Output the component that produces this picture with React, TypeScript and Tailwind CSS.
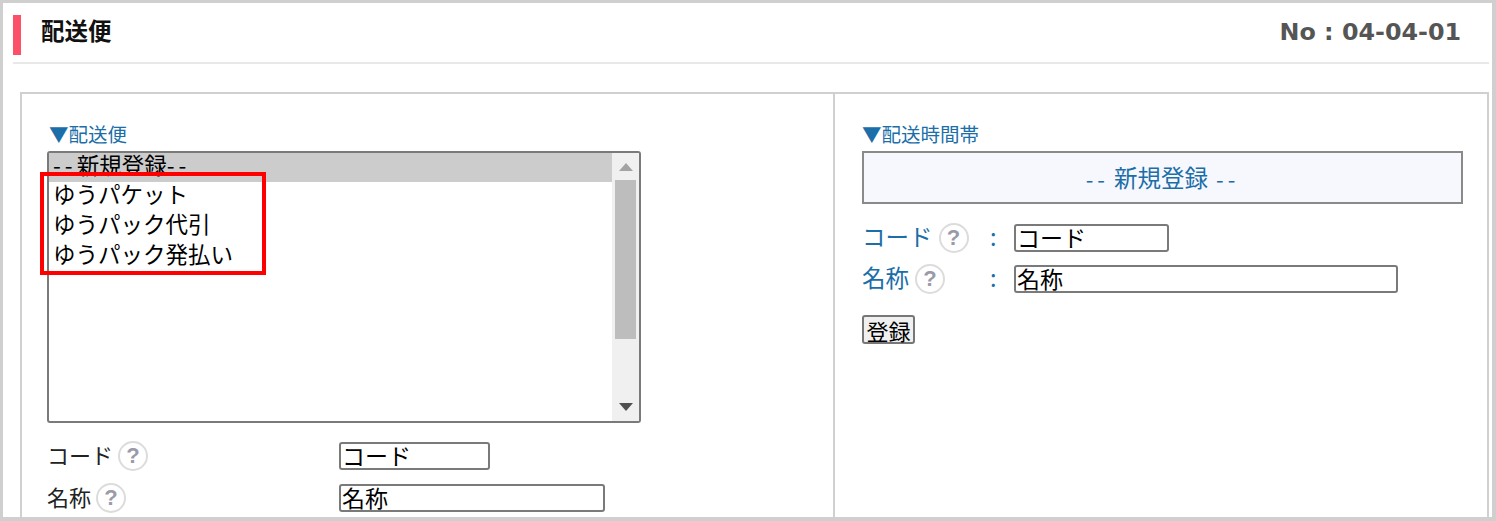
const FONT = "font-['Noto_Sans_CJK_JP','Liberation_Sans',sans-serif]";

function Help() {
  return (
    <span className="inline-flex h-[30px] w-[30px] shrink-0 items-center justify-center rounded-full border-2 border-[#dcdcdc] bg-white font-['Liberation_Sans',sans-serif] text-[22px] font-bold leading-none text-[#9a9aa8]">
      ?
    </span>
  );
}

function Field({ w, value }: { w: string; value: string }) {
  return (
    <input
      readOnly
      value={value}
      className={`${w} h-[28px] rounded-[3px] border-2 border-[#7a7a7a] bg-white pb-[3px] pl-[1px] text-[23px] leading-none text-black outline-none ${FONT}`}
    />
  );
}

function ScrollArrow({ up, dark }: { up?: boolean; dark?: boolean }) {
  return (
    <svg width="14" height="8" viewBox="0 0 14 8" className={dark ? "fill-[#505050]" : "fill-[#a3a3a3]"}>
      <path d={up ? "M7 0 14 8H0Z" : "M0 0H14L7 8Z"} />
    </svg>
  );
}

function Dashes() {
  return <span className="tracking-[4px]">--</span>;
}

export default function App() {
  return (
    <div className={`relative h-[521px] w-[1496px] overflow-hidden border-b-4 border-l-[3px] border-r-4 border-t-[3px] border-[#cfcfcf] bg-white ${FONT}`}>
      <header className="ml-[10px] mr-[3px] flex h-[61px] items-start border-b-2 border-[#e8e8e8] pt-[12px]">
        <div className="h-[40px] w-[8px] bg-[#fb5068]" />
        <h1 className="ml-[20px] -mt-[1px] text-[23.5px] font-bold leading-[32px] text-[#111]">配送便</h1>
        <div className="ml-auto mr-[28px] mt-[1px] font-['DejaVu_Sans',sans-serif] text-[23.8px] font-bold leading-[32px] text-[#555]">
          No : 04-04-01
        </div>
      </header>

      <main className="ml-[17px] mr-[3px] mt-[28px] flex h-[500px] border-2 border-[#d0d0d0]">
        <section className="w-[813px] shrink-0 border-r-2 border-[#d0d0d0] pl-[25px] pt-[28px]">
          <div className="ml-[2px] text-[19.5px] leading-[24px] text-[#1b6ea8]">▼配送便</div>
          <div className="mt-[5px] flex h-[272px] w-[594px] overflow-hidden rounded-[3px] border-2 border-[#7a7a7a] text-[22.5px] leading-[30px] text-black">
            <div className="min-w-0 flex-1 pl-[4px]">
              <div className="-ml-[4px] h-[29px] bg-[#cccccc] pl-[4px] leading-[22px]">
                <Dashes />新規登録<Dashes />
              </div>
              <div className="-mt-[4px]">ゆうパケット</div>
              <div>ゆうパック代引</div>
              <div>ゆうパック発払い</div>
            </div>
            <div className="flex w-[27px] shrink-0 flex-col items-center bg-[#f0f0f0]">
              <div className="flex h-[27px] items-center"><ScrollArrow up /></div>
              <div className="h-[159px] w-[21px] bg-[#bdbdbd]" />
              <div className="mt-auto flex h-[28px] items-center"><ScrollArrow dark /></div>
            </div>
          </div>
          <div className="mt-[18px] grid grid-cols-[292px_1fr] items-center gap-y-[12px] text-[22px] text-[#222]">
            <div className="flex items-center gap-[5px]"><span className="pb-[4px] leading-[24px]">コード</span><Help /></div>
            <Field w="w-[151px]" value="コード" />
            <div className="flex items-center gap-[5px]"><span className="pb-[4px] leading-[24px]">名称</span><Help /></div>
            <Field w="w-[266px]" value="名称" />
          </div>
        </section>

        <section className="flex-1 pl-[27px] pt-[28px]">
          <div className="text-[19.5px] leading-[24px] text-[#1b6ea8]">▼配送時間帯</div>
          <div className="mt-[5px] flex h-[53px] w-[601px] items-center justify-center gap-[8px] border-2 border-[#8a8a8a] bg-[#f7f8fe] pt-[1px] text-[23.5px] text-[#1b6ea8]">
            <span className="-mr-[3px] text-[22px] tracking-[4px]">--</span>
            <span>新規登録</span>
            <span className="text-[22px] tracking-[4px]">--</span>
          </div>
          <div className="mt-[19px] grid grid-cols-[128px_24px_1fr] items-center gap-y-[11px] text-[23.5px] text-[#1b6ea8]">
            <div className="flex items-center gap-[6px]"><span className="pb-[4px] leading-[24px]">コード</span><Help /></div>
            <span className="pb-[4px] leading-[24px]">:</span>
            <Field w="w-[155px]" value="コード" />
            <div className="flex items-center gap-[6px]"><span className="pb-[4px] leading-[24px]">名称</span><Help /></div>
            <span className="pb-[4px] leading-[24px]">:</span>
            <Field w="w-[384px]" value="名称" />
          </div>
          <button className="mt-[21px] block h-[29px] w-[53px] rounded-[3px] border-2 border-[#777] bg-[#f0f0f0] text-[22px] leading-none text-black">
            登録
          </button>
        </section>
      </main>

      <div className="absolute left-[37px] top-[169px] h-[103px] w-[226px] border-[4px] border-[#ff0000]" />
    </div>
  );
}
